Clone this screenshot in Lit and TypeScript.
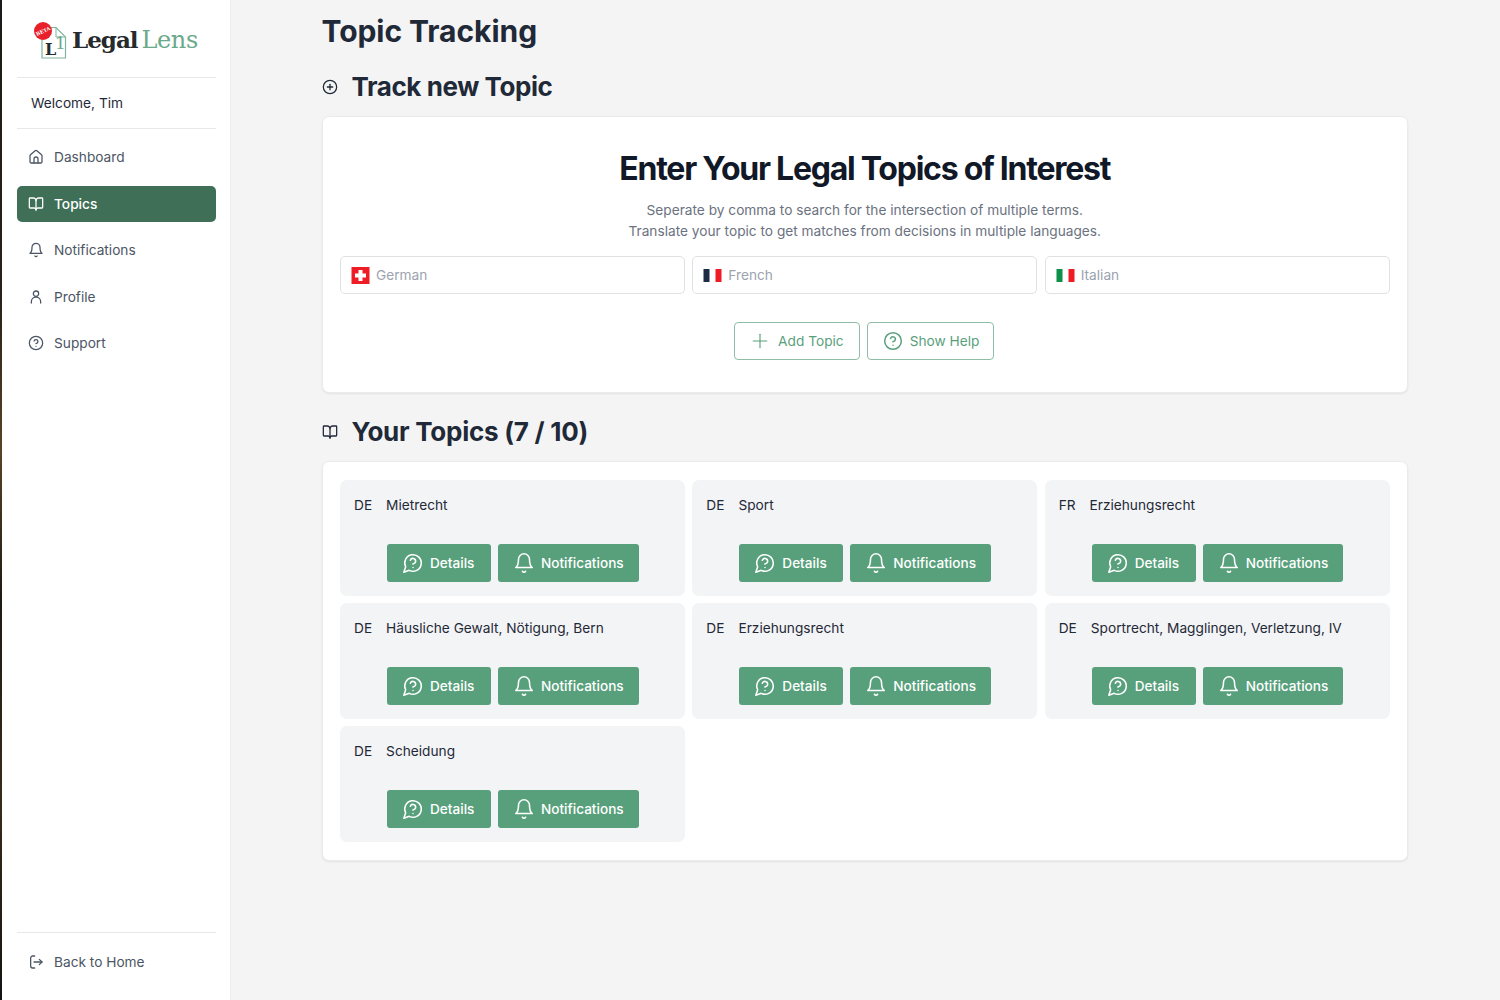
import { LitElement, html, css, svg } from "lit";
import { customElement } from "lit/decorators.js";

const ic = (body: unknown, cls = "") => html`<svg class="ic ${cls}" viewBox="0 0 24 24" fill="none" stroke="currentColor" stroke-width="1.9" stroke-linecap="round" stroke-linejoin="round">${body}</svg>`;
const home = svg`<path d="M9 21v-6a3 3 0 0 1 6 0v6"/><path d="M3 10a2 2 0 0 1 .709-1.528l7-5.999a2 2 0 0 1 2.582 0l7 5.999A2 2 0 0 1 21 10v9a2 2 0 0 1-2 2H5a2 2 0 0 1-2-2z"/>`;
const book = svg`<path d="M12 7v14"/><path d="M3 18a1 1 0 0 1-1-1V4a1 1 0 0 1 1-1h5a4 4 0 0 1 4 4 4 4 0 0 1 4-4h5a1 1 0 0 1 1 1v13a1 1 0 0 1-1 1h-6a3 3 0 0 0-3 3 3 3 0 0 0-3-3z"/>`;
const bell = svg`<path d="M6 8a6 6 0 0 1 12 0c0 7 3 9 3 9H3s3-2 3-9"/><path d="M10.3 21a1.94 1.94 0 0 0 3.4 0"/>`;
const user = svg`<circle cx="12" cy="7" r="4"/><path d="M5 21v-2a7 7 0 0 1 14 0v2"/>`;
const help = svg`<circle cx="12" cy="12" r="10"/><path d="M9.09 9a3 3 0 0 1 5.83 1c0 2-3 3-3 3"/><path d="M12 17h.01"/>`;
const exit = svg`<path d="M10 3H7a3 3 0 0 0-3 3v12a3 3 0 0 0 3 3h3"/><path d="M9 12h12"/><path d="M17 8l4 4-4 4"/>`;
const plusCircle = svg`<circle cx="12" cy="12" r="10"/><path d="M8 12h8"/><path d="M12 8v8"/>`;
const plus = svg`<path d="M3 12h18"/><path d="M12 3v18"/>`;
const msgHelp = svg`<path d="M7.9 20A9 9 0 1 0 4 16.1L2 22Z"/><path d="M9.09 9a3 3 0 0 1 5.83 1c0 2-3 3-3 3"/><path d="M12 17h.01"/>`;

const NAV = [
  { label: "Dashboard", icon: home },
  { label: "Topics", icon: book, active: true },
  { label: "Notifications", icon: bell },
  { label: "Profile", icon: user },
  { label: "Support", icon: help },
];
const TOPICS: [string, string][] = [
  ["DE", "Mietrecht"],
  ["DE", "Sport"],
  ["FR", "Erziehungsrecht"],
  ["DE", "Häusliche Gewalt, Nötigung, Bern"],
  ["DE", "Erziehungsrecht"],
  ["DE", "Sportrecht, Magglingen, Verletzung, IV"],
  ["DE", "Scheidung"],
];

@customElement("app-root")
export class AppRoot extends LitElement {
  static styles = css`
    :host { display: flex; min-height: 1000px; background: #f4f4f5; font-family: Inter, "Noto Sans", sans-serif; font-size: 13.7px; color: #1f2937; }
    * { box-sizing: border-box; }
    .ic { width: 16px; height: 16px; flex: none; display: block; }
    .edge { width: 2px; flex: none; background: linear-gradient(#1c1a17, #2a2119 30%, #5a4325 45%, #1e1a14 60%, #3a2a1a 80%, #151412); }
    .side { width: 229px; flex: none; height: 1000px; background: #fff; border-right: 1px solid #eeeeef; padding: 0 14px 0 15px; display: flex; flex-direction: column; }
    .logo { height: 78px; border-bottom: 1px solid #e8e8e9; display: flex; align-items: center; padding: 3px 0 0 16px; }
    .logo-mark { width: 36px; height: 38px; flex: none; margin-right: 3px; overflow: visible; }
    .logo-mark text { font-family: "DejaVu Serif", serif; }
    .word { font-family: "DejaVu Serif", "Liberation Serif", serif; display: flex; align-items: baseline; gap: 4px; }
    .word b { color: #262a2c; font-weight: 700; font-size: 23px; letter-spacing: -1px; }
    .word span { color: #6ba98b; font-weight: 400; font-size: 24px; letter-spacing: -0.4px; }
    .welcome { height: 51px; border-bottom: 1px solid #e8e8e9; display: flex; align-items: center; padding: 0 0 1px 14px; color: #1f2937; }
    nav { display: flex; flex-direction: column; gap: 10.5px; padding-top: 10px; flex: 1; }
    .item { height: 36px; border-radius: 5px; display: flex; align-items: center; gap: 10px; padding-left: 11px; color: #4b5563; }
    .item.active { background: #3f6f56; color: #fff; font-weight: 500; }
    .foot { border-top: 1px solid #e8e8e9; padding: 11px 0 20px; }
    main { flex: 1; padding: 0 92px 0 90.5px; min-width: 0; }
    h1 { margin: 0; font-size: 30px; line-height: 38px; padding-top: 12px; font-weight: 700; color: #1f2937; letter-spacing: -0.05px; }
    .h2 { display: flex; align-items: center; gap: 14px; color: #1f2937; }
    .h2 h2 { margin: 0; font-size: 26px; line-height: 36px; font-weight: 700; letter-spacing: -0.25px; }
    .h2.first { margin-top: 19px; }
    .h2.first h2 { letter-spacing: -0.43px; }
    .h2.second { margin-top: 21px; }
    .card { background: #fff; border: 1px solid #ebebec; border-radius: 7px; box-shadow: 0 1px 2px rgba(0,0,0,.08); padding: 18px 17.5px; margin-top: 11px; }
    .enter { height: 277px; padding-top: 0; }
    .enter h3 { margin: 32px 0 0; font-size: 32px; line-height: 40px; font-weight: 700; text-align: center; color: #111827; letter-spacing: -1.25px; }
    .enter p { margin: 11px 0 0; text-align: center; color: #6b7280; line-height: 21px; }
    .grid { display: grid; grid-template-columns: repeat(3, 1fr); column-gap: 7.5px; row-gap: 7px; }
    .inputs { margin-top: 14px; }
    .field { height: 38px; border: 1px solid #dfe1e5; border-radius: 5px; display: flex; align-items: center; gap: 6px; padding: 0 10px; background: #fff; }
    .field svg { width: 19px; height: 17px; flex: none; display: block; }
    .field input { border: 0; outline: 0; flex: 1; min-width: 0; padding: 0; font: inherit; color: #1f2937; background: none; }
    .field input::placeholder { color: #9ca3af; opacity: 1; }
    .actions { display: flex; justify-content: center; gap: 7px; margin: 28px 1px 0 0; }
    .outline { height: 38px; display: flex; align-items: center; background: #fff; border: 1px solid #8fbda5; border-radius: 4px; color: #5a9f7d; font: inherit; }
    .outline .ic { stroke-width: 1.8; }
    .outline.add { gap: 9px; padding: 0 15px 0 16px; }
    .outline.add .ic { width: 18px; height: 18px; stroke-width: 1.5; }
    .outline.help { gap: 7px; padding: 0 14px 0 15px; }
    .outline.help .ic { width: 20px; height: 20px; }
    .topic { height: 116px; background: #f3f4f6; border-radius: 7px; padding: 15px 14px 14px; display: flex; flex-direction: column; }
    .head { display: flex; gap: 14px; line-height: 21px; color: #1f2937; }
    .btns { display: flex; gap: 7px; margin-top: auto; margin-left: 33px; }
    .solid { height: 38px; display: flex; align-items: center; gap: 7px; border: 0; border-radius: 3px; background: #57a07b; color: #fff; font: inherit; font-size: 13.6px; font-weight: 500; padding: 0 15px 0 16px; }
    .solid.details { min-width: 104px; }
    .solid .ic { width: 22px; height: 22px; margin: 0 -1px; stroke-width: 1.7; }
  `;

  render() {
    return html`
      <div class="edge"></div>
      <aside class="side">
        <div class="logo">
          <svg class="logo-mark" viewBox="0 0 36 38">
            <path d="M9 6.5h14l9.5 9.5v21H9z" fill="#fff" stroke="#7fb59b" stroke-width="1.2"/>
            <path d="M23 6.5v9.5h9.5" fill="none" stroke="#7fb59b" stroke-width="1"/>
            <text x="12" y="34" font-size="16" font-weight="700" fill="#262a2c">L</text>
            <text x="22" y="28" font-size="17" fill="#6ba98b">1</text>
            <circle cx="10" cy="10" r="9" fill="#e8202a"/>
            <text x="10" y="12" font-size="5" font-weight="700" fill="#fff" text-anchor="middle" transform="rotate(-25 10 10)">BETA</text>
          </svg>
          <div class="word"><b>Legal</b><span>Lens</span></div>
        </div>
        <div class="welcome">Welcome, Tim</div>
        <nav>
          ${NAV.map((n) => html`<div class="item ${n.active ? "active" : ""}">${ic(n.icon)}<span>${n.label}</span></div>`)}
        </nav>
        <div class="foot"><div class="item">${ic(exit)}<span>Back to Home</span></div></div>
      </aside>
      <main>
        <h1>Topic Tracking</h1>
        <div class="h2 first">${ic(plusCircle)}<h2>Track new Topic</h2></div>
        <section class="card enter">
          <h3>Enter Your Legal Topics of Interest</h3>
          <p>Seperate by comma to search for the intersection of multiple terms.<br />Translate your topic to get matches from decisions in multiple languages.</p>
          <div class="grid inputs">
            <label class="field">
              <svg viewBox="0 0 18 17"><rect width="18" height="17" fill="#ee1c25"/><path d="M7 3h4v3.5h3.5v4H11V14H7v-3.5H3.5v-4H7z" fill="#fff"/></svg>
              <input placeholder="German" />
            </label>
            <label class="field">
              <svg viewBox="0 0 18 17"><rect y="2" width="6" height="13" fill="#1f2a44"/><rect x="12" y="2" width="6" height="13" fill="#ee1c25"/></svg>
              <input placeholder="French" />
            </label>
            <label class="field">
              <svg viewBox="0 0 18 17"><rect y="2" width="6" height="13" fill="#0f9048"/><rect x="12" y="2" width="6" height="13" fill="#ee1c25"/></svg>
              <input placeholder="Italian" />
            </label>
          </div>
          <div class="actions">
            <button class="outline add">${ic(plus)}<span>Add Topic</span></button>
            <button class="outline help">${ic(help)}<span>Show Help</span></button>
          </div>
        </section>
        <div class="h2 second">${ic(book)}<h2>Your Topics (7 / 10)</h2></div>
        <section class="card topics">
          <div class="grid">
            ${TOPICS.map(([lang, name]) => html`
              <div class="topic">
                <div class="head"><span>${lang}</span><span>${name}</span></div>
                <div class="btns">
                  <button class="solid details">${ic(msgHelp)}<span>Details</span></button>
                  <button class="solid">${ic(bell)}<span>Notifications</span></button>
                </div>
              </div>`)}
          </div>
        </section>
      </main>
    `;
  }
}
